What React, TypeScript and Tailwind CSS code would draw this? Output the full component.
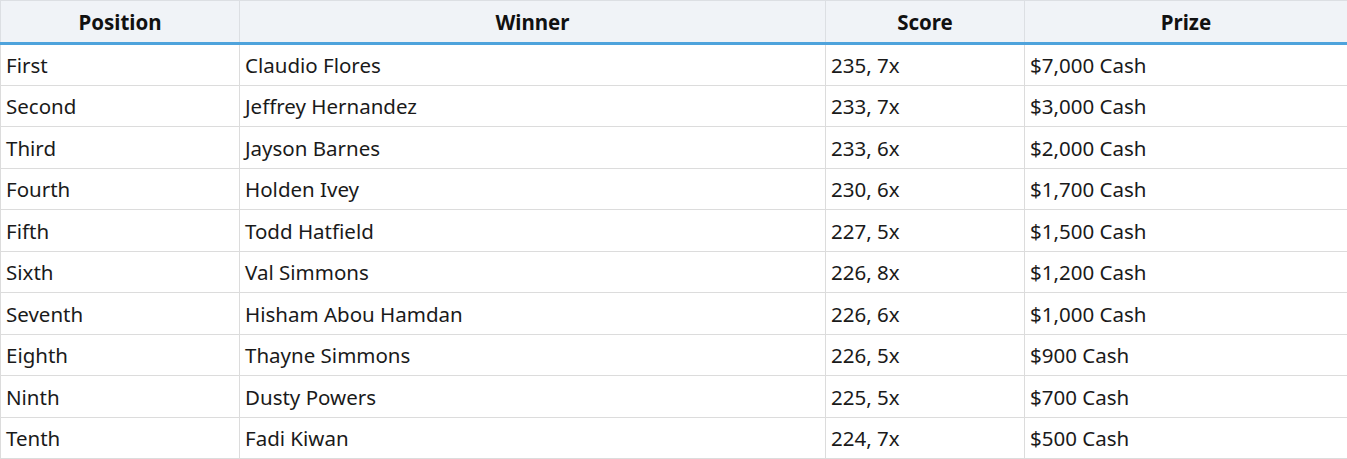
import React from "react";

const rows: [string, string, string, string][] = [
  ["First", "Claudio Flores", "235, 7x", "$7,000 Cash"],
  ["Second", "Jeffrey Hernandez", "233, 7x", "$3,000 Cash"],
  ["Third", "Jayson Barnes", "233, 6x", "$2,000 Cash"],
  ["Fourth", "Holden Ivey", "230, 6x", "$1,700 Cash"],
  ["Fifth", "Todd Hatfield", "227, 5x", "$1,500 Cash"],
  ["Sixth", "Val Simmons", "226, 8x", "$1,200 Cash"],
  ["Seventh", "Hisham Abou Hamdan", "226, 6x", "$1,000 Cash"],
  ["Eighth", "Thayne Simmons", "226, 5x", "$900 Cash"],
  ["Ninth", "Dusty Powers", "225, 5x", "$700 Cash"],
  ["Tenth", "Fadi Kiwan", "224, 7x", "$500 Cash"],
];

export default function App() {
  return (
    <div className="w-[1347px] h-[459px] overflow-hidden bg-white" style={{ fontFamily: '"Noto Sans", "Open Sans", sans-serif' }}>
      <table className="w-[1347px] border-collapse table-fixed text-[20.5px] text-[#1a1a1a]">
        <colgroup>
          <col className="w-[239px]" />
          <col className="w-[586px]" />
          <col className="w-[199px]" />
          <col className="w-[323px]" />
        </colgroup>
        <thead>
          <tr className="h-[43px] bg-[#f0f3f7]">
            {["Position", "Winner", "Score", "Prize"].map((h) => (
              <th key={h} className="border border-[#dcdfe3] border-b-[3px] border-b-[#4ea3dc] font-bold text-center text-[#111] p-0 pt-[1px] leading-none">
                {h}
              </th>
            ))}
          </tr>
        </thead>
        <tbody>
          {rows.map((r) => (
            <tr key={r[0]} className="h-[41.5px]">
              {r.map((c, i) => (
                <td key={i} className="border border-[#dcdcdc] px-[5px] py-0 pt-[1px] leading-none whitespace-nowrap">
                  {c}
                </td>
              ))}
            </tr>
          ))}
        </tbody>
      </table>
    </div>
  );
}
